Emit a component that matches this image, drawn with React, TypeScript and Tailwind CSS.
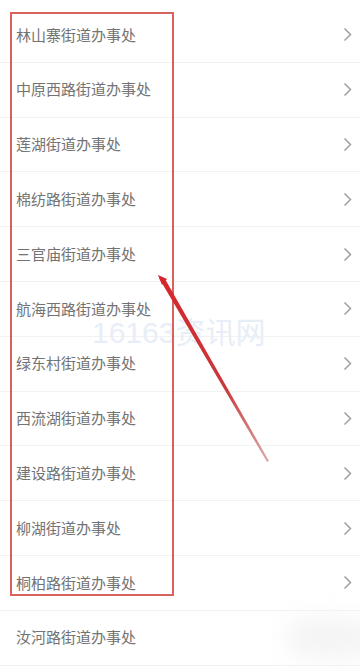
import React from "react";

const items = [
  "林山寨街道办事处",
  "中原西路街道办事处",
  "莲湖街道办事处",
  "棉纺路街道办事处",
  "三官庙街道办事处",
  "航海西路街道办事处",
  "绿东村街道办事处",
  "西流湖街道办事处",
  "建设路街道办事处",
  "柳湖街道办事处",
  "桐柏路街道办事处",
  "汝河路街道办事处",
];

function Chevron() {
  return (
    <svg width="9" height="15" viewBox="0 0 9 15" fill="none">
      <path d="M1.5 1.5 L7.5 7.5 L1.5 13.5" stroke="#a0a0a0" strokeWidth="1.5" />
    </svg>
  );
}

export default function App() {
  return (
    <div
      className="relative w-[360px] h-[672px] overflow-hidden bg-white"
      style={{ fontFamily: '"Noto Sans CJK SC", "Noto Sans", sans-serif' }}
    >
      <div className="pt-[8px]">
        {items.map((name, i) => (
          <div key={name} className="h-[54.8px] flex items-center justify-between pl-4 pr-[8px] border-b border-[#f2f2f2]">
            <span className="text-[15px] text-[#737373]">{name}</span>
            {i < items.length - 1 ? (
              <Chevron />
            ) : (
              <div className="w-[90px] h-[40px] rounded-full bg-[#f4f4f4] blur-md -mr-6" />
            )}
          </div>
        ))}
      </div>

      {/* watermark */}
      <div className="absolute left-[92px] top-[318px] text-[30px] leading-none text-[#e8eef7] pointer-events-none" style={{ fontFamily: '"Liberation Sans", "Noto Sans CJK SC", sans-serif' }}>
        16163资讯网
      </div>

      {/* red highlight box */}
      <div className="absolute left-[10px] top-[12px] w-[164px] h-[584px] border-2 border-[#d8625c] pointer-events-none" />

      {/* arrow */}
      <svg className="absolute left-0 top-0 pointer-events-none" width="360" height="672">
        <defs>
          <linearGradient id="ar" x1="160" y1="278" x2="268" y2="461" gradientUnits="userSpaceOnUse">
            <stop offset="0" stopColor="#d7262b" />
            <stop offset="0.6" stopColor="#c8383c" />
            <stop offset="1" stopColor="#dcaaa8" />
          </linearGradient>
        </defs>
        <polygon points="159,278 165,279 269,461 267,462" fill="url(#ar)" />
        <polygon points="158,275 167,279 162,285" fill="#d7262b" />
      </svg>
    </div>
  );
}
